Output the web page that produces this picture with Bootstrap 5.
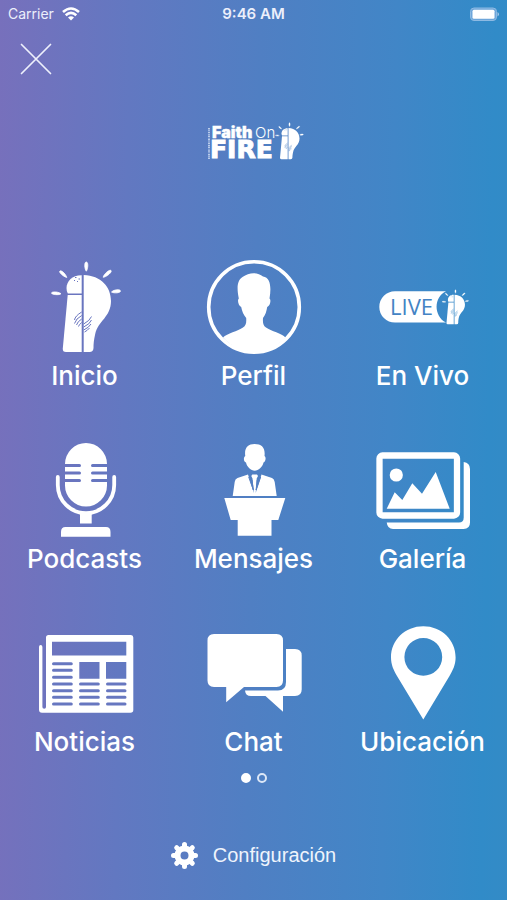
<!DOCTYPE html>
<html lang="es">
<head>
<meta charset="utf-8">
<meta name="viewport" content="width=device-width, initial-scale=1">
<title>Faith On Fire</title>
<link href="https://cdn.jsdelivr.net/npm/bootstrap@5.3.0/dist/css/bootstrap.min.css" rel="stylesheet">
<style>
  body {
    font-family: Inter, "Liberation Sans", sans-serif;
    color: #fff;
    background: linear-gradient(91deg, #7770bc 0%, #6278c1 25%, #507fc3 50%, #4186c7 76%, #318bc8 95%, #338bc6 100%);
  }
  a, a:hover { color: inherit; }
  .status-bar { height: 28px; font-size: 14px; line-height: 28px; color: #eceffb; }
  .status-time { font-weight: 600; font-size: 15px; }
  .close-btn { width: 72px; height: 62px; }
  .brand-logo { margin-top: 32px; height: 40px; }
  .brand-logo svg { overflow: visible; }
  .menu-grid { margin-top: 98px; row-gap: 45px; }
  .menu-icon { width: 94px; height: 94px; overflow: visible; fill: #fff; }
  .menu-label { font-size: 26px; line-height: 44px; font-weight: 500; }
  .pager { margin-top: 9px; gap: 6px; }
  .pager-dot { width: 10px; height: 10px; border: 2px solid #dce7f7; }
  .pager-dot.current { background: #fff; border-color: #fff; }
  .settings-link { margin-top: 52px; gap: 15px; font-family: "Liberation Sans", Arial, sans-serif; font-size: 20px; line-height: 40px; color: #eff4fc; }
</style>
</head>
<body class="min-vh-100">

<svg width="0" height="0" class="position-absolute" aria-hidden="true">
  <defs>
    <mask id="hands" maskUnits="userSpaceOnUse" x="0" y="0" width="94" height="94">
      <rect width="94" height="94" fill="#fff"/>
      <g fill="none" stroke="#000" stroke-width="1">
        <path d="M36.500 60Q37 56 43.700 52M36.500 63.500Q38 58.500 43.700 55.500M38.500 65Q39.500 61.500 43.700 59M40.500 66.500Q41 64.500 43.700 62.500"/>
        <path d="M53.500 56.500Q52 60.500 45.700 64M53.500 60Q52 64 45.700 67M53 64Q51 67.500 45.700 70M51.500 68Q49.500 70.500 46.500 72"/>
        <path d="M37 17.500h1.500M40.500 19h1.500M36 20.500h1M39 21.500h1"/>
      </g>
    </mask>
    <symbol id="bulb" viewBox="0 0 94 94">
      <g mask="url(#hands)">
        <path d="M43.700 15.200C34.500 15 28.500 21 28.500 28Q28.500 31.500 29.800 33.600H43.700Z"/>
        <path d="M29.700 35H43.700V92H28Q24.500 92 24.800 88.500Z"/>
        <path d="M45.700 15C63 15.500 73 27 73 41C73 57 60 61 57.200 74C55.800 80 55.500 84 55.500 88Q55.300 92 51.500 92H45.700Z"/>
      </g>
      <path d="M48.300 11.200C46.500 9 46 2 48.300 2S50 9 48.300 11.200ZM28.800 17.500C26 17 20 12 22 11S28.200 15 28.800 17.500ZM23 33.700C21 35.500 13.500 34.500 13.500 33S20.500 31.500 23 33.700ZM65.200 17.300C65.500 14.500 71.500 9 73 10.500S68.500 17 65.200 17.300ZM73.500 32C75.500 29.500 82.500 29 82.500 31S76 33.500 73.500 32Z" stroke="#fff" stroke-width=".8"/>
    </symbol>
  </defs>
</svg>

<header>
  <div class="status-bar row g-0">
    <div class="col-4 d-flex align-items-center ps-2">
      <span>Carrier</span>
      <svg class="ms-2" width="18" height="14" viewBox="0 0 18 14" fill="none" stroke="#fff" stroke-width="2.600" role="img" aria-label="Wi-Fi">
        <path d="M1 5Q9-2 17 5M3.700 8.200Q9 3.500 14.300 8.200"/><path d="M9 13.500L6 10.500Q9 8 12 10.500Z" fill="#fff" stroke="none"/>
      </svg>
    </div>
    <div class="col-4 text-center status-time">9:46 AM</div>
    <div class="col-4 d-flex align-items-center justify-content-end pe-2">
      <svg width="30" height="15" viewBox="0 0 30 15" role="img" aria-label="Batería">
        <rect x="1.500" y="1" width="26" height="12.500" rx="3.500" fill="#6ea6da" stroke="#8dbae3" stroke-width="1"/>
        <rect x="3.500" y="2.700" width="22" height="9" rx="1.500" fill="#fff"/><path d="M28.500 5Q31.500 7.200 28.500 9.500Z" fill="#a4c6e7"/>
      </svg>
    </div>
  </div>
  <button type="button" class="close-btn btn border-0 p-0 d-flex align-items-center justify-content-center" aria-label="Cerrar">
    <svg width="32" height="32" viewBox="0 0 32 32" stroke="#eef0fc" stroke-width="1.700" stroke-linecap="round"><path d="M1.500 1.500l29 29M30.500 1.500l-29 29"/></svg>
  </button>
</header>

<main>
  <div class="brand-logo d-flex justify-content-center">
    <svg width="98" height="40" viewBox="206 122 98 40" fill="#fff" role="img" aria-label="Faith On Fire">
      <text x="213" y="138" font-family="Inter" font-weight="900" font-size="16" stroke="#fff" stroke-width=".4">Faith</text>
      <text x="256" y="138" font-family="Inter" font-weight="300" font-size="15">On</text>
      <text x="211" y="158" font-family="DejaVu Sans" font-weight="700" font-size="25" stroke="#fff" stroke-width="1">FIRE</text>
      <path d="M210 128V159" stroke="#c6d5f0" stroke-width="1.800" stroke-dasharray="1.500 .8 .8 .6"/>
      <use href="#bulb" x="271" y="122" width="38" height="38"/>
    </svg>
  </div>

  <nav aria-label="Principal">
    <div class="menu-grid row gx-0 text-center">
      <a href="#inicio" class="col-4 d-flex flex-column align-items-center text-decoration-none">
        <svg class="menu-icon" viewBox="0 0 94 94" aria-hidden="true"><use href="#bulb" width="94" height="94"/></svg>
        <span class="menu-label">Inicio</span>
      </a>
      <a href="#perfil" class="col-4 d-flex flex-column align-items-center text-decoration-none">
        <svg class="menu-icon" viewBox="0 0 94 94" aria-hidden="true">
          <circle cx="47" cy="47" r="45.300" fill="none" stroke="#fff" stroke-width="3.600"/>
          <path d="M16 77.500C20 73.500 31 71 36 67.500C39 65.500 39.500 63 39.200 58C36.500 55 35 51 34.200 47C31.500 46 30 40 31.800 38.500C30 29 29.500 21 35.500 17C42 12 51 12 56 16.500C63.500 17.500 64.500 27 62.500 38.500C64.500 40 63 46 60.200 47C59.500 51 58.500 55 56 58C55.700 63 56 65.500 59 67.500C64 71 75 73.500 78.500 77.500C62 96 32 96 16 77.500Z"/>
        </svg>
        <span class="menu-label">Perfil</span>
      </a>
      <a href="#en-vivo" class="col-4 d-flex flex-column align-items-center text-decoration-none">
        <svg class="menu-icon" viewBox="1 0 94 94" aria-hidden="true">
          <path d="M20 31.200H71C58.500 37 58.500 56 71 62.600H20A15.700 15.700 0 0 1 20 31.200Z"/>
          <text x="15" y="54.500" font-family="Open Sans" font-size="22" fill="#4383c4">LIVE</text>
          <use href="#bulb" x="62" y="29" width="36" height="36"/>
        </svg>
        <span class="menu-label">En Vivo</span>
      </a>

      <a href="#podcasts" class="col-4 d-flex flex-column align-items-center text-decoration-none">
        <svg class="menu-icon" viewBox="0 0 94 94" aria-hidden="true">
          <path d="M27 21A21 21 0 0 1 69 21H54.500A1.400 1.400 0 0 0 54.500 24H69V28.500H54.500A1.400 1.400 0 0 0 54.500 31.500H69V36H54.500A1.400 1.400 0 0 0 54.500 39H69V42.500A21 21 0 0 1 27 42.500V39H41.500A1.400 1.400 0 0 0 41.500 36H27V31.500H41.500A1.400 1.400 0 0 0 41.500 28.500H27V24H41.500A1.400 1.400 0 0 0 41.500 21Z"/>
          <path d="M19.800 34V42A28.200 28.200 0 0 0 76.200 42V34" fill="none" stroke="#fff" stroke-width="3.800" stroke-linecap="round"/>
          <path d="M42 70H53.700V80.500H42ZM27.500 84H68Q72.500 84 72.500 89V93.700H23V89Q23 84 27.500 84Z"/>
        </svg>
        <span class="menu-label">Podcasts</span>
      </a>
      <a href="#mensajes" class="col-4 d-flex flex-column align-items-center text-decoration-none">
        <svg class="menu-icon" viewBox="0 0 94 94" aria-hidden="true">
          <path d="M38.300 13C37 5 41 1 47.500 1C55 1 58.500 5 57.500 13C59.500 14 58.500 19 56.500 19.500C55.500 24 51.500 27.700 47.700 27.700S40 24 39 19.500C36.500 19 36.200 14 38.300 13Z"/>
          <path d="M41 31.500L46.800 50L45.500 35.500L44.300 33L45.300 31.500H50L51 33L49.700 35.500L48.700 50L54.500 31.500L65 35Q67.300 36 67.700 39L69.700 53H25.700L27.700 39Q28 36 30.500 35Z"/>
          <path d="M17.300 55H78.300L71.300 77H64.500V92.700H30.700V77H23.700Z"/>
          <path d="M41.700 34L46.400 47L45 37M53.700 34L49.100 47L50.200 37" fill="none" stroke="#5580c4" stroke-width="1"/>
        </svg>
        <span class="menu-label">Mensajes</span>
      </a>
      <a href="#galeria" class="col-4 d-flex flex-column align-items-center text-decoration-none">
        <svg class="menu-icon" viewBox="1 0 94 94" aria-hidden="true">
          <rect x="4.500" y="12.500" width="77.500" height="60" rx="3" fill="none" stroke="#fff" stroke-width="6.300"/>
          <circle cx="21.300" cy="32" r="6.600"/>
          <path d="M11.700 65.700L19.700 49.300L27.300 57L37.300 40.300L47 50.700L60.700 29L74.700 65.700ZM88.700 19Q95 20 95 26V79.500Q95 86 88.500 86H18Q12.500 86 11.700 79.500H84Q88.700 79.500 88.700 74.500Z"/>
        </svg>
        <span class="menu-label">Galería</span>
      </a>

      <a href="#noticias" class="col-4 d-flex flex-column align-items-center text-decoration-none">
        <svg class="menu-icon" viewBox="0 0 94 94" aria-hidden="true">
          <path fill-rule="evenodd" d="M10.500 9H93Q95.300 9 95.300 11.500V84Q95.300 86.700 92.500 86.700H4Q1 86.700 1 83.500V21Q1 19 2.700 19T4.400 21V81Q4.400 82.700 6.200 82.700T8 81V11.500Q8 9 10.500 9ZM14 15.700V29.500H88.300V15.700ZM41.300 36V52.700H61.500V36ZM68 36V52.700H88.300V36Z"/>
          <path d="M15.500 37.700H33.300M15.500 44.300H33.300M15.500 51.300H33.300M15.500 58H33.300M15.500 64.700H33.300M15.500 71.300H33.300M15.500 78H33.300M42.500 58H60.300M42.500 64.700H60.300M42.500 71.300H60.300M42.500 78H60.300M69.500 58H87M69.500 64.700H87M69.500 71.300H87M69.500 78H87" stroke="#6777c0" stroke-width="3" stroke-linecap="round"/>
        </svg>
        <span class="menu-label">Noticias</span>
      </a>
      <a href="#chat" class="col-4 d-flex flex-column align-items-center text-decoration-none">
        <svg class="menu-icon" viewBox="0 0 94 94" aria-hidden="true">
          <path d="M7 8H69.500Q76 8 76 14.500V54.500Q76 61 69.500 61H37L19.200 76.300V61H7Q.5 61 .5 54.500V14.500Q.5 8 7 8Z"/>
          <path d="M79 23H88Q94.700 23 94.700 29.500V63.500Q94.700 70 88 70H76V85.700L58.500 70H44Q38.500 70 38 64.500H71Q79 64.500 79 56Z"/>
        </svg>
        <span class="menu-label">Chat</span>
      </a>
      <a href="#ubicacion" class="col-4 d-flex flex-column align-items-center text-decoration-none">
        <svg class="menu-icon" viewBox="1 0 94 94" aria-hidden="true">
          <path fill-rule="evenodd" d="M48.300 .3C66.500 .3 80.600 14 80.600 31.500C80.600 38.500 78 44 74.500 50L48.300 93.500L22 50C18.500 44 16 38.500 16 31.500C16 14 30 .3 48.300 .3ZM48.300 12A18.900 18.900 0 1 0 48.300 49.800A18.900 18.900 0 1 0 48.300 12Z"/>
        </svg>
        <span class="menu-label">Ubicación</span>
      </a>
    </div>
  </nav>

  <div class="pager d-flex justify-content-center">
    <button type="button" class="pager-dot current rounded-circle p-0" aria-label="Página 1" aria-current="true"></button>
    <button type="button" class="pager-dot rounded-circle bg-transparent p-0" aria-label="Página 2"></button>
  </div>
</main>

<footer class="d-flex justify-content-center">
  <a href="#configuracion" class="settings-link d-flex align-items-center text-decoration-none">
    <svg width="27" height="27" viewBox="-13.500 -13.500 27 27" aria-hidden="true">
      <circle r="7" fill="none" stroke="#fff" stroke-width="6"/>
      <g stroke="#fff" stroke-width="5" stroke-linecap="round"><path d="M0-9V-11M0 9V11M-9 0H-11M9 0H11M6.500-6.500L7.800-7.800M-6.500-6.500L-7.800-7.800M6.500 6.500L7.800 7.800M-6.500 6.500L-7.800 7.800"/></g>
    </svg>
    <span>Configuración</span>
  </a>
</footer>

<script src="https://cdn.jsdelivr.net/npm/bootstrap@5.3.0/dist/js/bootstrap.bundle.min.js"></script>
</body>
</html>
